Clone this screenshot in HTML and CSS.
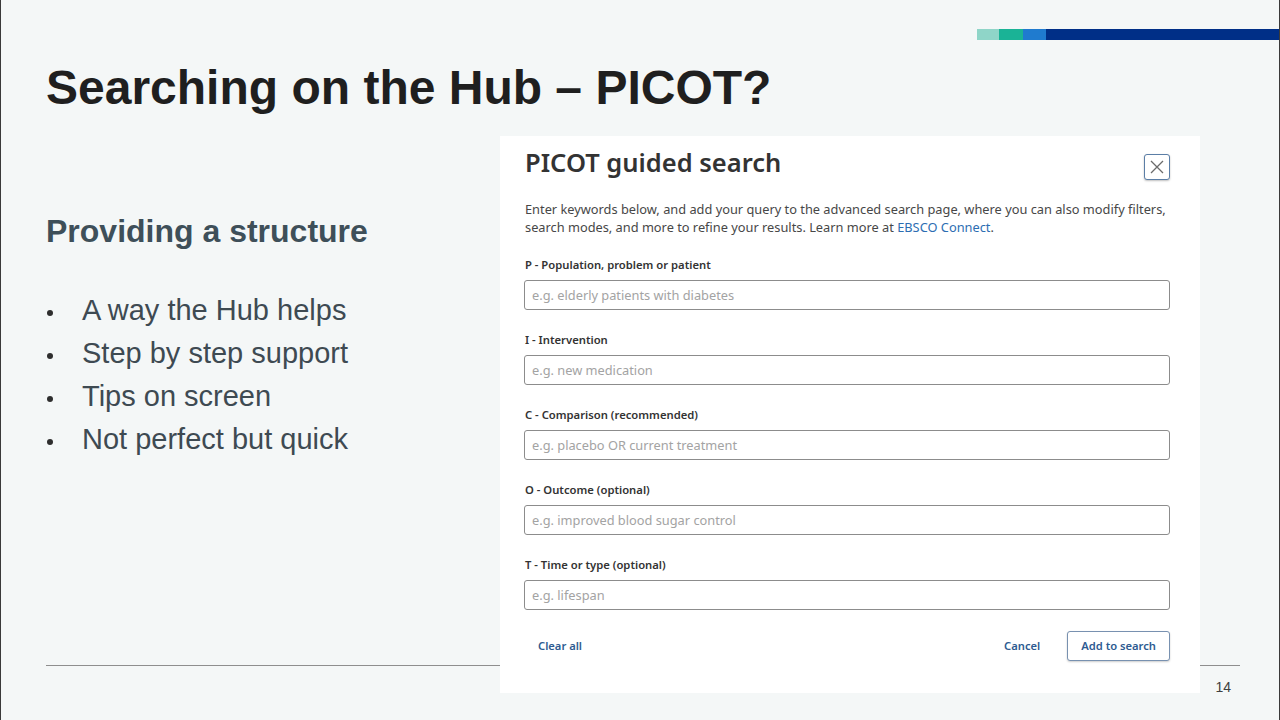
FILE: index.html
```html
<!DOCTYPE html>
<html lang="en">
<head>
<meta charset="utf-8">
<title>Searching on the Hub – PICOT?</title>
<link rel="stylesheet" href="styles.css">
</head>
<body>
<div class="slide">
  <div class="accent">
    <span class="seg seg1"></span><span class="seg seg2"></span><span class="seg seg3"></span><span class="seg seg4"></span>
  </div>
  <h1 class="title">Searching on the Hub – PICOT?</h1>
  <div class="main">
    <div class="left">
      <h2 class="subtitle">Providing a structure</h2>
      <ul class="bullets">
        <li>A way the Hub helps</li>
        <li>Step by step support</li>
        <li>Tips on screen</li>
        <li>Not perfect but quick</li>
      </ul>
    </div>
    <div class="modal">
      <div class="modal-head">
        <h3 class="modal-title">PICOT guided search</h3>
        <button class="close" aria-label="Close">
          <svg width="16" height="16" viewBox="0 0 16 16"><path d="M2 2 L14 14 M14 2 L2 14" stroke="#6b6b6b" stroke-width="1.3" fill="none"/></svg>
        </button>
      </div>
      <p class="desc">Enter keywords below, and add your query to the advanced search page, where you can also modify filters, search modes, and more to refine your results. Learn more at <span class="link">EBSCO Connect</span>.</p>
      <div class="field">
        <label class="label">P - Population, problem or patient</label>
        <div class="input">e.g. elderly patients with diabetes</div>
      </div>
      <div class="field">
        <label class="label">I - Intervention</label>
        <div class="input">e.g. new medication</div>
      </div>
      <div class="field">
        <label class="label">C - Comparison (recommended)</label>
        <div class="input">e.g. placebo OR current treatment</div>
      </div>
      <div class="field">
        <label class="label">O - Outcome (optional)</label>
        <div class="input">e.g. improved blood sugar control</div>
      </div>
      <div class="field">
        <label class="label">T - Time or type (optional)</label>
        <div class="input">e.g. lifespan</div>
      </div>
      <div class="actions">
        <button class="text-btn">Clear all</button>
        <div class="right-actions">
          <button class="text-btn">Cancel</button>
          <button class="outline-btn">Add to search</button>
        </div>
      </div>
    </div>
  </div>
  <div class="footer"><span class="page">14</span></div>
</div>
</body>
</html>
```
FILE: styles.css
```css
* { box-sizing: border-box; }
html, body { margin: 0; padding: 0; }
body { background: #f4f7f7; }

.slide {
  width: 1280px;
  height: 720px;
  overflow: hidden;
  background: #f4f7f7;
  border-left: 1px solid #3a3a3a;
  border-right: 1px solid #3a3a3a;
  display: flex;
  flex-direction: column;
  font-family: "Liberation Sans", Arial, sans-serif;
}

.accent {
  display: flex;
  justify-content: flex-end;
  margin-top: 29px;
  height: 11px;
}
.seg { display: block; height: 11px; }
.seg1 { width: 22px; background: #8fd5c8; }
.seg2 { width: 24px; background: #1ab396; }
.seg3 { width: 23px; background: #1f7bcf; }
.seg4 { width: 233px; background: #002f87; }

.title {
  margin: 20px 0 0 45px;
  font-size: 48px;
  line-height: 56px;
  font-weight: 700;
  color: #1f1f1f;
}

.main {
  display: flex;
  margin-top: 20px;
  margin-bottom: -28px;
}

.left {
  width: 499px;
  flex: none;
  padding: 75px 0 0 45px;
}
.subtitle {
  margin: 0;
  font-size: 32px;
  line-height: 40px;
  font-weight: 700;
  color: #3e4f59;
}
.bullets {
  list-style: none;
  margin: 38px 0 0 0;
  padding: 0;
}
.bullets li {
  display: flex;
  align-items: center;
  font-size: 29px;
  line-height: 43px;
  color: #3e4a52;
}
.bullets li::before {
  content: "";
  width: 6px;
  height: 6px;
  border-radius: 50%;
  background: #2e2e2e;
  margin: 4px 29px 0 1px;
  flex: none;
}

.modal {
  position: relative;
  z-index: 1;
  width: 700px;
  flex: none;
  background: #ffffff;
  padding: 10px 30px 32px 24px;
  font-family: "Noto Sans", "Open Sans", sans-serif;
}
.modal-head {
  display: flex;
  justify-content: space-between;
  align-items: flex-start;
}
.modal-title {
  margin: 0 0 0 1px;
  font-size: 25.5px;
  line-height: 32px;
  font-weight: 600;
  color: #333333;
}
.close {
  width: 26px;
  height: 26px;
  margin-top: 8px;
  padding: 0;
  border: 1px solid #5b7ea6;
  border-radius: 3px;
  background: #ffffff;
  box-shadow: 0 1px 2px rgba(0, 0, 0, 0.25);
  display: flex;
  align-items: center;
  justify-content: center;
}
.desc {
  margin: 20px 0 0 1px;
  font-size: 12.8px;
  line-height: 18px;
  color: #474747;
}
.link { color: #2c6db2; }

.field { margin-top: 21px; }
.field + .field { margin-top: 22px; }
.label {
  display: block;
  margin-left: 1px;
  font-size: 11.25px;
  line-height: 16px;
  font-weight: 600;
  color: #333333;
}
.input {
  margin-top: 7px;
  height: 30px;
  border: 1px solid #8c8c8c;
  border-radius: 3px;
  padding: 0 7px;
  font-size: 12.8px;
  line-height: 28px;
  color: #a3a3a3;
}

.actions {
  display: flex;
  justify-content: space-between;
  align-items: center;
  margin-top: 21px;
}
.right-actions { display: flex; align-items: center; gap: 13px; }
.text-btn, .outline-btn {
  font-family: "Noto Sans", "Open Sans", sans-serif;
  font-size: 11.2px;
  font-weight: 600;
  color: #2e5b91;
  background: transparent;
  height: 30px;
  line-height: 28px;
  padding: 0 13px;
  border: 1px solid transparent;
  border-radius: 3px;
}
.outline-btn {
  border-color: #7891b0;
  background: #ffffff;
  box-shadow: 0 1px 2px rgba(0, 0, 0, 0.2);
}

.footer {
  margin: 0 39px 0 45px;
  border-top: 1px solid #8e8e8e;
  display: flex;
  justify-content: flex-end;
  padding-top: 13px;
}
.page {
  font-size: 14px;
  line-height: 16px;
  color: #404040;
  margin-right: 9px;
}
```
